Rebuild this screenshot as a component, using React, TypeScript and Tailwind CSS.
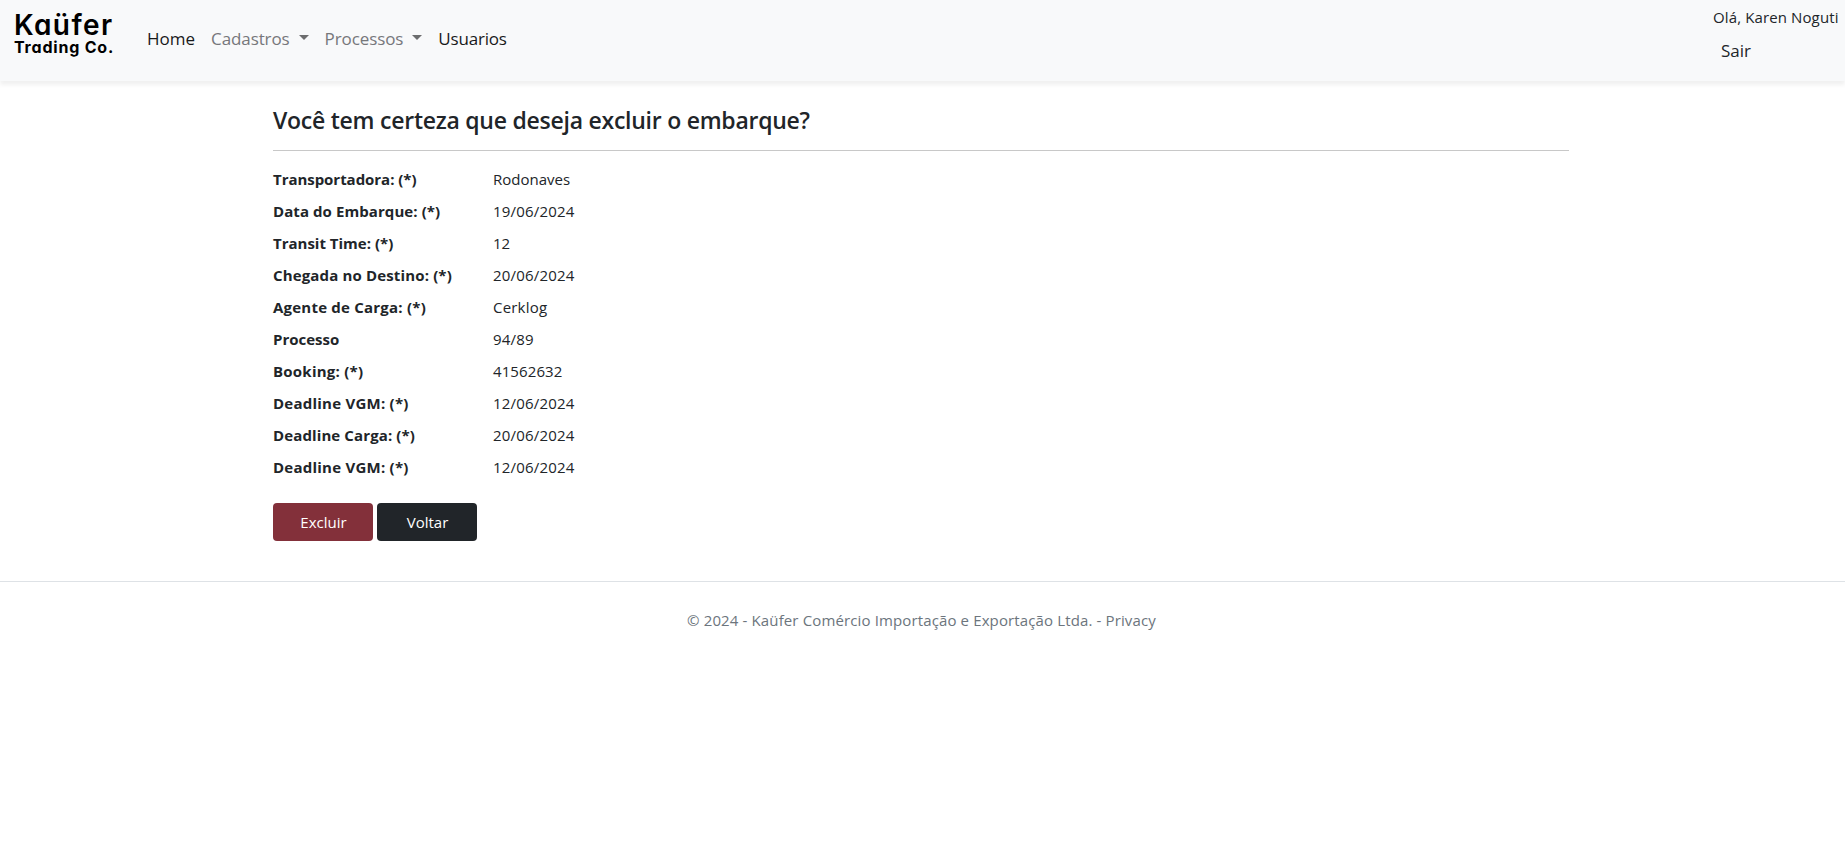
const fields = [
  { label: "Transportadora: (*)", value: "Rodonaves", labelClass: "tracking-[-0.04px]", valueClass: "" },
  { label: "Data do Embarque: (*)", value: "19/06/2024", labelClass: "tracking-[0.08px]", valueClass: "tracking-[0.18px]" },
  { label: "Transit Time: (*)", value: "12", labelClass: "", valueClass: "" },
  { label: "Chegada no Destino: (*)", value: "20/06/2024", labelClass: "tracking-[0.15px]", valueClass: "tracking-[0.18px]" },
  { label: "Agente de Carga: (*)", value: "Cerklog", labelClass: "tracking-[0.22px]", valueClass: "tracking-[0.2px]" },
  { label: "Processo", value: "94/89", labelClass: "", valueClass: "tracking-[0.18px]" },
  { label: "Booking: (*)", value: "41562632", labelClass: "tracking-[0.24px]", valueClass: "tracking-[0.1px]" },
  { label: "Deadline VGM: (*)", value: "12/06/2024", labelClass: "tracking-[0.24px]", valueClass: "tracking-[0.18px]" },
  { label: "Deadline Carga: (*)", value: "20/06/2024", labelClass: "tracking-[0.12px]", valueClass: "tracking-[0.18px]" },
  { label: "Deadline VGM: (*)", value: "12/06/2024", labelClass: "tracking-[0.24px]", valueClass: "tracking-[0.18px]" },
];

function Dropdown({ label }: { label: string }) {
  return (
    <span className="flex items-center text-[#76777a]">
      <span className="tracking-[-0.1px]">{label}</span>
      <span className="mt-[-3px] ml-[9px] h-0 w-0 border-x-[5px] border-t-[5px] border-x-transparent border-t-[#6c6d6e]" />
    </span>
  );
}

export default function App() {
  return (
    <div className="min-h-[861px] bg-white font-['Open_Sans',sans-serif] text-[15px] leading-6 text-[#212529]">
      <header className="flex h-[81px] items-start bg-[#f8f9fa] shadow-[0_4px_4px_rgba(0,0,0,0.06)]">
        <div className="ml-[14px] w-[133px] pt-[8px] font-['Inter',sans-serif] whitespace-nowrap text-black [font-feature-settings:'cv11']">
          <div className="h-[31px] text-[28px] leading-[34px] font-semibold tracking-[1.4px]">Kaüfer</div>
          <div className="text-[16px] leading-[16px] font-bold tracking-[0.8px]">Trading Co.</div>
        </div>
        <nav className="flex h-[78px] items-center gap-4 text-[17px]">
          <span className="text-[#18191a]">Home</span>
          <Dropdown label="Cadastros" />
          <Dropdown label="Processos" />
          <span className="tracking-[-0.2px] text-[#18191a]">Usuarios</span>
        </nav>
        <div className="mr-[6px] ml-auto w-[126px] pt-[5px] whitespace-nowrap">
          <div className="h-[34px] tracking-[0.12px]">Olá, Karen Noguti</div>
          <div className="pl-2 text-[17px]">Sair</div>
        </div>
      </header>
      <main className="ml-[273px] w-[1296px] pt-[23px]">
        <h1 className="h-[46px] text-[23px] leading-[32px] font-semibold tracking-[-0.25px]">
          Você tem certeza que deseja excluir o embarque?
        </h1>
        <hr className="mb-[16px] border-[#c8c8c8]" />
        <dl className="grid grid-cols-[220px_1fr]">
          {fields.map((f, i) => (
            <div key={i} className="contents">
              <dt className={`h-8 font-bold ${f.labelClass}`}>{f.label}</dt>
              <dd className={`h-8 ${f.valueClass}`}>{f.value}</dd>
            </div>
          ))}
        </dl>
        <div className="mt-4 flex gap-1 text-white">
          <button className="h-[38px] w-[100px] rounded bg-[#83303a] pl-px">Excluir</button>
          <button className="h-[38px] w-[100px] rounded bg-[#212529] pl-px">Voltar</button>
        </div>
      </main>
      <footer className="mt-10 w-full border-t border-[#dee2e6] pt-[26px] pr-[2px] text-center tracking-[0.13px] text-[#6c757d]">
        © 2024 - Kaüfer Comércio Importação e Exportação Ltda. - Privacy
      </footer>
    </div>
  );
}
